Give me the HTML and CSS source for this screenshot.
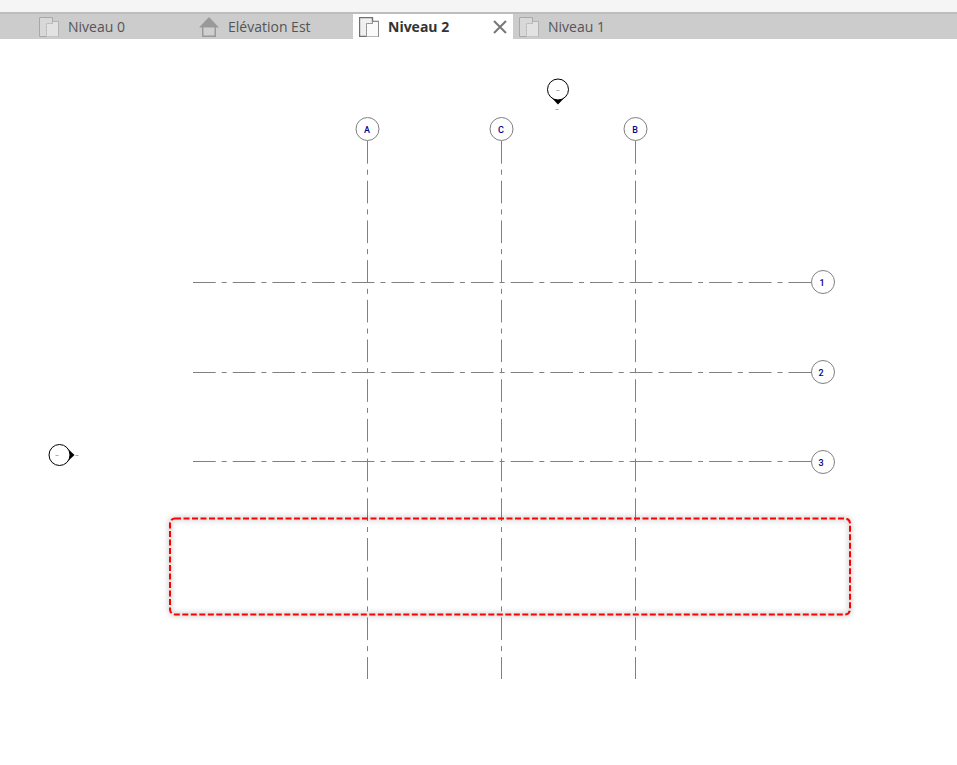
FILE: index.html
```html
<!DOCTYPE html>
<html lang="fr">
<head>
  <meta charset="UTF-8">
  <meta name="viewport" content="width=device-width, initial-scale=1.0">
  <title>Niveau 2</title>
  <link rel="stylesheet" href="styles.css">
</head>
<body>
  <div class="top-strip"></div>

  <!-- Onglets des vues -->
  <div class="tab-bar">
    <div class="tab">
      <svg class="tab-icon" viewBox="0 0 20 20"><path class="sheet-back" d="M.5 .5H13.5V4.5H19.5V19.5H.5Z"/><path class="sheet-front" d="M7.5 19.5V6.5H13.5V4.5H19.5V19.5"/><path class="sheet-dash" d="M7.5 19V6.5H13.5"/></svg>
      <span>Niveau 0</span>
    </div>
    <div class="tab">
      <svg class="tab-icon" viewBox="0 0 20 20"><path class="house-body" d="M3.75 10V19.25H16.25V10"/><path class="house-roof" d="M10 0 20 10.5H0Z"/></svg>
      <span>Elévation Est</span>
    </div>
    <div class="tab tab-active">
      <svg class="tab-icon" viewBox="0 0 20 20"><path class="sheet-back" d="M.5 .5H13.5V4.5H19.5V19.5H.5Z"/><path class="sheet-front" d="M7.5 19.5V6.5H13.5V4.5H19.5V19.5"/><path class="sheet-dash" d="M7.5 19V6.5H13.5"/></svg>
      <span>Niveau 2</span>
      <svg class="tab-close" viewBox="0 0 14 14"><path d="M1 1 13 13M13 1 1 13"/></svg>
    </div>
    <div class="tab">
      <svg class="tab-icon" viewBox="0 0 20 20"><path class="sheet-back" d="M.5 .5H13.5V4.5H19.5V19.5H.5Z"/><path class="sheet-front" d="M7.5 19.5V6.5H13.5V4.5H19.5V19.5"/><path class="sheet-dash" d="M7.5 19V6.5H13.5"/></svg>
      <span>Niveau 1</span>
    </div>
  </div>

  <!-- Vue en plan: coordonnees en px de la page, decalees de 39 -->
  <svg class="plan" width="957" height="726" viewBox="0 39 957 726">
    <!-- files verticales -->
    <line class="grid-line" x1="367.5" y1="141" x2="367.5" y2="679"/>
    <line class="grid-line" x1="501.5" y1="141" x2="501.5" y2="679"/>
    <line class="grid-line" x1="635.5" y1="141" x2="635.5" y2="679"/>

    <!-- files horizontales -->
    <line class="grid-line" x1="193" y1="282.5" x2="811" y2="282.5"/>
    <line class="grid-line" x1="193" y1="372.5" x2="811" y2="372.5"/>
    <line class="grid-line" x1="193" y1="461.5" x2="811" y2="461.5"/>

    <circle class="bubble" cx="367.5" cy="129" r="11.5"/>
    <circle class="bubble" cx="501.5" cy="129" r="11.5"/>
    <circle class="bubble" cx="635.5" cy="129" r="11.5"/>
    <circle class="bubble" cx="823" cy="282" r="11.5"/>
    <circle class="bubble" cx="823" cy="372" r="11.5"/>
    <circle class="bubble" cx="823" cy="462" r="11.5"/>

    <text class="bubble-label" x="367" y="132.5">A</text>
    <text class="bubble-label" x="501" y="132.5">C</text>
    <text class="bubble-label" x="635" y="132.5">B</text>
    <text class="bubble-label" x="822" y="285.5">1</text>
    <text class="bubble-label" x="821" y="375.5">2</text>
    <text class="bubble-label" x="821" y="465.5">3</text>

    <!-- marques d'elevation -->
    <path class="marker-tip" d="M549 95 558 104.5 567 95Z"/>
    <circle class="marker" cx="558" cy="89.5" r="10.5"/>
    <line class="marker-tick" x1="556.5" y1="90.5" x2="559.5" y2="90.5"/>
    <line class="marker-tick" x1="555.5" y1="109.5" x2="558.5" y2="109.5"/>

    <path class="marker-tip" d="M65 446 74.5 455 65 464Z"/>
    <circle class="marker" cx="59.5" cy="455" r="10.5"/>
    <line class="marker-tick" x1="55.5" y1="455.5" x2="58.5" y2="455.5"/>
    <line class="marker-tick" x1="75.5" y1="455.5" x2="78.5" y2="455.5"/>

    <!-- zone de selection rouge -->
    <rect class="zone-glow" x="170" y="518.5" width="680" height="96" rx="5"/>
    <rect class="zone" x="170" y="518.5" width="680" height="96" rx="5"/>
  </svg>
</body>
</html>
```

FILE: styles.css
```css
body {
  margin: 0;
  background: #ffffff;
  font-family: 'Open Sans', 'Liberation Sans', sans-serif;
}

.top-strip {
  height: 12px;
  background-color: #f5f5f5;
}

.tab-bar {
  display: flex;
  height: 25px;
  padding-left: 33px;
  background-color: #cccccc;
  border-top: 2px solid #bdbdbd;
}

.tab {
  display: flex;
  align-items: center;
  gap: 9px;
  width: 160px;
  box-sizing: border-box;
  padding-left: 6px;
  color: #555555;
  font-size: 14px;
}

.tab-active {
  background-color: #ffffff;
  color: #333333;
  font-weight: bold;
}

.tab-icon {
  flex: none;
  width: 20px;
  height: 20px;
}

.tab-close {
  width: 14px;
  height: 14px;
  margin-left: auto;
  margin-right: 6px;
}

.tab-close path {
  fill: none;
  stroke: #777777;
  stroke-width: 2;
}

.sheet-back {
  fill: #d8d8d8;
  stroke: #a8a8a8;
  stroke-width: 1;
}

.sheet-front {
  fill: #e2e2e2;
  stroke: #b4b4b4;
  stroke-width: 1;
}

.sheet-dash {
  fill: none;
  stroke: #c4c4c4;
  stroke-width: 1;
  stroke-dasharray: 2 1;
}

.tab-active .sheet-back {
  fill: #f0f0f0;
  stroke: #707070;
  stroke-width: 1.4;
}

.tab-active .sheet-front {
  fill: #fafafa;
  stroke: #8a8a8a;
}

.tab-active .sheet-dash {
  stroke: #a0a0a0;
}

.house-roof {
  fill: #999999;
}

.house-body {
  fill: #cfcfcf;
  stroke: #999999;
  stroke-width: 1.5;
}

.plan {
  display: block;
}

.grid-line {
  stroke: #808080;
  stroke-width: 1;
  stroke-dasharray: 22.7 6 5 6;
}

.bubble {
  fill: #ffffff;
  stroke: #808080;
  stroke-width: 1;
}

.bubble-label {
  font-family: Roboto, 'Liberation Sans', sans-serif;
  font-size: 9px;
  font-weight: 500;
  fill: #00008b;
  text-anchor: middle;
}

.marker {
  fill: #ffffff;
  stroke: #000000;
  stroke-width: 1;
}

.marker-tip {
  fill: #000000;
}

.marker-tick {
  stroke: #aaaaaa;
  stroke-width: 1;
}

.zone {
  fill: none;
  stroke: #ff0000;
  stroke-width: 2;
  stroke-dasharray: 6 2.5;
}

.zone-glow {
  fill: none;
  stroke: rgba(0, 0, 0, 0.18);
  stroke-width: 4;
  filter: blur(2.5px);
}
```
